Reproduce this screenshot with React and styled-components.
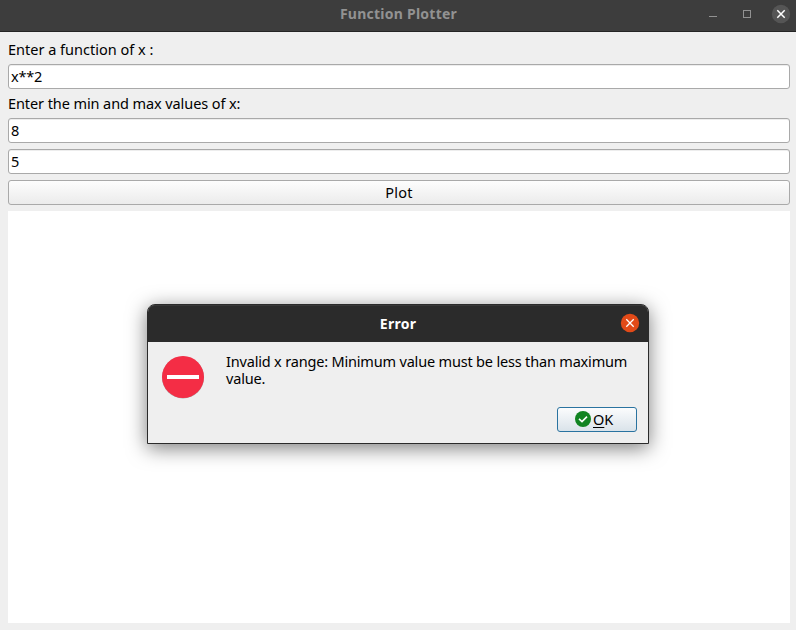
import React from "react";
import styled, { createGlobalStyle } from "styled-components";

const GlobalStyle = createGlobalStyle`
  * { box-sizing: border-box; }
  body { margin: 0; overflow: hidden; background: #efefef; }
  button, input { font: inherit; color: inherit; letter-spacing: inherit; }
`;

const Window = styled.div`
  position: relative;
  width: 796px;
  height: 630px;
  display: flex;
  flex-direction: column;
  background: #efefef;
  color: #000;
  font: 14.5px/17px "Noto Sans", sans-serif;
`;

const TitleBar = styled.header`
  display: grid;
  grid-template-columns: 1fr auto 1fr;
  align-items: center;
  height: 32px;
  flex: none;
  padding: 0 5px 4px 6px;
  background: #3d3d3d;
  border-bottom: 1px solid #242424;
  color: #929292;
`;

const Title = styled.h1`
  grid-column: 2;
  margin: 0;
  font-size: 14px;
  line-height: 17px;
  font-weight: 700;
  white-space: nowrap;
  letter-spacing: 0.25px;
`;

const WindowControls = styled.div`
  display: flex;
  justify-content: flex-end;
  svg { display: block; }
`;

const Form = styled.main`
  flex: 1;
  display: flex;
  flex-direction: column;
  gap: 6px;
  padding: 9px 6px 7px 8px;
`;

const Label = styled.label`
  height: 17px;
  white-space: nowrap;
  letter-spacing: ${(p) => p.$spacing};
`;

const Input = styled.input`
  display: block;
  width: 100%;
  height: 25px;
  padding: 0 2px 2px;
  border: 1px solid #a9a9a9;
  border-radius: 3px;
  background: #fff;
  box-shadow: inset 0 1px 0 #ededed;
  outline: none;
  letter-spacing: -0.2px;
`;

const PlotButton = styled.button`
  height: 25px;
  padding: 0;
  border: 1px solid #a9a9a9;
  border-radius: 3px;
  background: linear-gradient(#fdfdfd, #ebebeb);
  letter-spacing: 0.3px;
`;

const Canvas = styled.div`
  flex: 1;
  background: #fff;
`;

const Dialog = styled.section`
  position: absolute;
  left: 147px;
  top: 304px;
  width: 502px;
  height: 140px;
  display: flex;
  flex-direction: column;
  border: 1px solid #2b2b2b;
  border-radius: 8px 8px 0 0;
  background: #efefef;
  box-shadow: 0 4px 20px rgba(0, 0, 0, 0.52);
`;

const DialogBar = styled.header`
  display: grid;
  grid-template-columns: 1fr auto 1fr;
  align-items: center;
  height: 37px;
  flex: none;
  padding: 0 8px;
  border-radius: 7px 7px 0 0;
  background: #2b2b2b;
  box-shadow: inset 0 1px 0 #383838;
  color: #fff;
`;

const DialogClose = styled.svg`
  justify-self: end;
  display: block;
  margin-bottom: 2px;
`;

const Message = styled.div`
  display: flex;
  padding: 11px 0 0 12px;
  height: 65px;
`;

const StopIcon = styled.svg`
  flex: none;
  margin: 1px 19px 0 1px;
`;

const MessageText = styled.p`
  margin: 0;
  width: 412px;
  letter-spacing: -0.18px;
`;

const Actions = styled.footer`
  display: flex;
  justify-content: flex-end;
  padding-right: 11px;
`;

const OkButton = styled.button`
  display: flex;
  align-items: center;
  width: 80px;
  height: 25px;
  padding: 0 0 0 17px;
  gap: 2px;
  border: 1px solid #2a73a0;
  border-radius: 3px;
  background: linear-gradient(#fbfcfd, #dae3ea);

  svg { margin-bottom: 1px; }
`;

const Mnemonic = styled.span`
  text-decoration: underline;
  text-decoration-thickness: 1px;
  text-underline-offset: 2px;
`;

export default function App() {
  return (
    <Window>
      <GlobalStyle />
      <TitleBar>
        <Title>Function Plotter</Title>
        <WindowControls>
          <svg width="84" height="20" viewBox="0 0 84 20" fill="none">
            <path d="M2 12.5h8" stroke="#929292" />
            <rect x="36.5" y="6.5" width="7" height="7" stroke="#929292" />
            <circle cx="74" cy="10" r="9.2" fill="#555" />
            <path d="M70.3 6.3l7.4 7.4M77.7 6.3l-7.4 7.4" stroke="#fff" strokeWidth="1.5" />
          </svg>
        </WindowControls>
      </TitleBar>
      <Form>
        <Label $spacing="0" htmlFor="fn">Enter a function of x :</Label>
        <Input id="fn" defaultValue="x**2" />
        <Label $spacing="-0.09px" htmlFor="min">Enter the min and max values of x:</Label>
        <Input id="min" defaultValue="8" />
        <Input defaultValue="5" />
        <PlotButton>Plot</PlotButton>
        <Canvas />
      </Form>
      <Dialog role="dialog">
        <DialogBar>
          <Title as="h2">Error</Title>
          <DialogClose width="20" height="20" viewBox="0 0 20 20" fill="none">
            <circle cx="10" cy="10" r="9.2" fill="#e24a18" />
            <path d="M6.3 6.3l7.4 7.4M13.7 6.3l-7.4 7.4" stroke="#fff" strokeWidth="1.3" />
          </DialogClose>
        </DialogBar>
        <Message>
          <StopIcon width="46" height="46" viewBox="0 0 46 46">
            <circle cx="22" cy="23.4" r="21" fill="#a7a7a7" />
            <circle cx="22" cy="23" r="21" fill="#f42d45" />
            <path d="M6 21h32v4H6z" fill="#fff" />
          </StopIcon>
          <MessageText>
            Invalid x range: Minimum value must be less than maximum value.
          </MessageText>
        </Message>
        <Actions>
          <OkButton>
            <svg width="16" height="16" viewBox="0 0 16 16" fill="none">
              <circle cx="8" cy="8" r="8" fill="#118422" />
              <path d="M4 7.8l3 2.8 5-5" stroke="#fff" strokeWidth="1.6" />
            </svg>
            <span><Mnemonic>O</Mnemonic>K</span>
          </OkButton>
        </Actions>
      </Dialog>
    </Window>
  );
}
